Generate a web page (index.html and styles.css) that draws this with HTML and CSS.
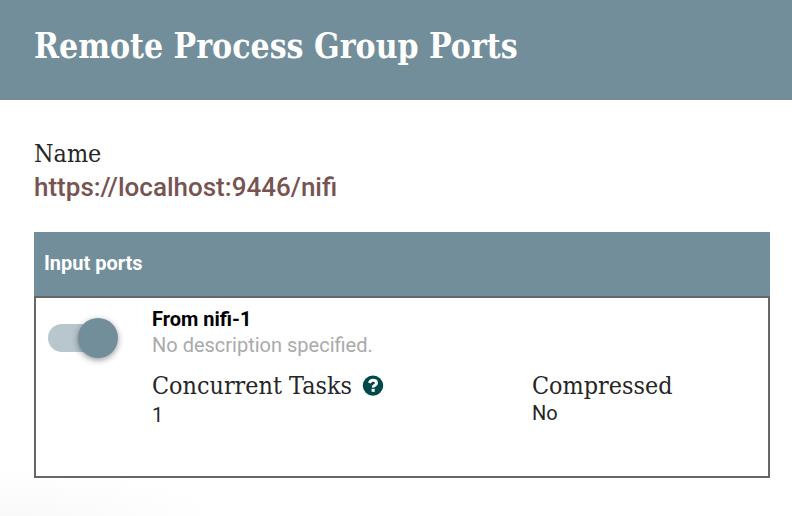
FILE: index.html
```html
<!DOCTYPE html>
<html lang="en">
<head>
<meta charset="utf-8">
<title>Remote Process Group Ports</title>
<link rel="stylesheet" href="styles.css">
</head>
<body>
<header class="header"><h1 class="title"><span>Remote Process Group Ports</span></h1></header>
<main class="content">
  <div class="label name-label"><span>Name</span></div>
  <div class="url"><span>https://localhost:9446/nifi</span></div>
  <section class="ports">
    <h2 class="ports-head"><span>Input ports</span></h2>
    <div class="port">
      <div class="toggle"><div class="thumb"></div></div>
      <div class="info">
        <div class="port-name"><span>From nifi-1</span></div>
        <div class="desc"><span>No description specified.</span></div>
        <div class="fields">
          <div class="field">
            <div class="label tasks"><span class="tasks-text">Concurrent Tasks</span>
              <svg class="help" viewBox="0 0 20 20"><circle cx="10" cy="9.6" r="10.2" fill="#004849"/><path d="M6.4 6.9C7.1 5 8.3 4.2 10 4.2c2 0 3.5 1.1 3.5 2.8 0 2.4-3.3 2.2-3.3 4.5" fill="none" stroke="#fff" stroke-width="3"/><rect x="8.6" y="12.8" width="3.1" height="3" fill="#fff"/></svg>
            </div>
            <div class="value count"><span>1</span></div>
          </div>
          <div class="field">
            <div class="label compressed"><span>Compressed</span></div>
            <div class="value"><span>No</span></div>
          </div>
        </div>
      </div>
    </div>
  </section>
</main>
</body>
</html>
```
FILE: styles.css
```css
* { box-sizing: border-box; }
body { margin: 0; height: 516px; overflow: hidden; background: radial-gradient(ellipse 200px 44px at 20px 100%, #f9f9f9, #fff) #fff; font-family: Roboto, sans-serif; color: #262626; }
h1, h2 { margin: 0; }
.header { height: 100px; background: #728e9b; padding: 22px 34px; }
.title, .label { font-family: "Roboto Slab", "DejaVu Serif", serif; }
.title { font-size: 36px; line-height: 46px; font-weight: 700; color: #fff; white-space: nowrap; }
.title span, .label span { display: inline-block; transform-origin: 0 50%; }
.title span { transform: scaleX(.836); }
.label span { transform: scaleX(.932); }
.content { padding: 38px 22px 0 34px; }
.label { font-size: 24px; line-height: 32px; white-space: nowrap; }
.url { font-size: 26px; line-height: 34px; font-weight: 500; color: #775351; }
.ports { margin-top: 28px; }
.ports-head { height: 64px; padding-left: 10px; background: #728e9b; color: #fff; font-size: 20px; line-height: 63px; font-weight: 700; }
.port { height: 182px; border: 2px solid #666; background: #fff; display: flex; padding: 8px 0 0 12px; }
.toggle { width: 68px; height: 28px; margin-top: 18px; border-radius: 14px; background: #b8c6cd; display: flex; justify-content: flex-end; align-items: center; }
.thumb { flex: none; width: 40px; height: 40px; margin-right: -2px; border-radius: 50%; background: #728e9b; box-shadow: 0 2px 6px rgba(0,0,0,.4); }
.info { margin-left: 36px; flex: 1; }
.port-name { font-size: 20px; line-height: 26px; font-weight: 700; color: #000; }
.desc { font-size: 20px; line-height: 26px; color: #aaa; }
.fields { display: grid; grid-template-columns: 380px 1fr; margin-top: 12px; }
.tasks { display: flex; align-items: center; }
.tasks-text { flex: none; width: 211px; }
.help { flex: none; width: 20px; height: 20px; overflow: visible; }
.value { font-size: 20px; line-height: 22px; }
.count { line-height: 26px; }
```
